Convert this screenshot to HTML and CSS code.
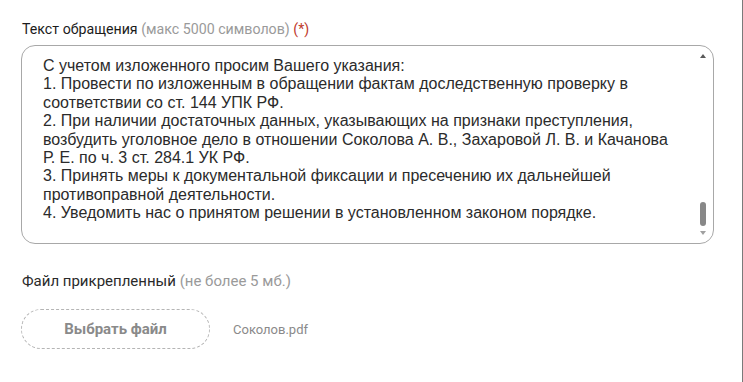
FILE: index.html
```html
<!DOCTYPE html>
<html lang="ru">

<head>
    <meta charset="UTF-8">
    <meta name="viewport" content="width=device-width, initial-scale=1.0">
    <title>Обращение</title>
    <link rel="stylesheet" href="styles.css">
</head>

<body>
    <div class="form">
        <div class="field">
            <label class="label">Текст обращения <span class="hint">(макс 5000 символов)</span> <span class="req">(*)</span></label>
            <div class="textbox">
                <div class="textbox-text">
                    <div>С учетом изложенного просим Вашего указания:</div>
                    <div>1. Провести по изложенным в обращении фактам доследственную проверку в</div>
                    <div>соответствии со ст. 144 УПК РФ.</div>
                    <div>2. При наличии достаточных данных, указывающих на признаки преступления,</div>
                    <div>возбудить уголовное дело в отношении Соколова А. В., Захаровой Л. В. и Качанова</div>
                    <div>Р. Е. по ч. 3 ст. 284.1 УК РФ.</div>
                    <div>3. Принять меры к документальной фиксации и пресечению их дальнейшей</div>
                    <div>противоправной деятельности.</div>
                    <div>4. Уведомить нас о принятом решении в установленном законом порядке.</div>
                </div>
                <div class="scrollbar">
                    <span class="arrow arrow-up"></span>
                    <span class="track"><span class="thumb"></span></span>
                    <span class="arrow arrow-down"></span>
                </div>
            </div>
        </div>

        <div class="field field-file">
            <label class="label">Файл прикрепленный <span class="hint">(не более 5 мб.)</span></label>
            <div class="file-row">
                <button class="file-btn">Выбрать файл</button>
                <span class="file-name">Соколов.pdf</span>
            </div>
        </div>
    </div>
</body>

</html>
```

FILE: styles.css
```css
html,
body {
    height: 100%;
}

body {
    margin: 0;
    background-color: #fff;
    border-right: 1px solid #7a7a7a;
    box-sizing: border-box;
    font-family: Roboto, 'Liberation Sans', sans-serif;
    color: #1c1c1c;
}

.form {
    padding: 20px 28px 0 21px;
}

.label {
    display: block;
    font-size: 14.2px;
    line-height: 18px;
    margin: 0 0 7px 1px;
}

.hint {
    color: #9a9a9a;
}

.req {
    color: #c0392b;
}

.textbox {
    display: flex;
    height: 199px;
    box-sizing: border-box;
    border: 1px solid #a8a8a8;
    border-radius: 14px;
    background-color: #fff;
}

.textbox-text {
    flex: 1;
    padding: 11px 10px 0 21px;
    font-family: 'Liberation Sans', Arial, sans-serif;
    font-size: 16px;
    line-height: 18.4px;
    color: #2b2b2b;
    white-space: nowrap;
    overflow: hidden;
}

.scrollbar {
    width: 16px;
    display: flex;
    flex-direction: column;
    align-items: center;
    padding: 8px 0 8px;
    margin-right: 2px;
}

.arrow {
    width: 0;
    height: 0;
    border-left: 3px solid transparent;
    border-right: 3px solid transparent;
}

.arrow-up {
    border-bottom: 4px solid #5a5a5a;
}

.arrow-down {
    border-top: 4px solid #a0a0a0;
}

.track {
    flex: 1;
    display: flex;
    flex-direction: column;
    justify-content: flex-end;
    padding: 0 0 5px;
}

.thumb {
    width: 6px;
    height: 24px;
    border-radius: 3px;
    background-color: #888;
}

.field-file {
    margin-top: 28px;
}

.field-file .label {
    font-size: 15px;
    color: #2a2a2a;
    margin-bottom: 19px;
}

.file-row {
    display: flex;
    align-items: center;
}

.file-btn {
    width: 189px;
    height: 40px;
    border: 1px dashed #b5b5b5;
    border-radius: 20px;
    background: #fff;
    font-family: Roboto, 'Liberation Sans', sans-serif;
    font-size: 15px;
    font-weight: bold;
    color: #8a8a8a;
    cursor: pointer;
}

.file-name {
    margin-left: 23px;
    font-size: 13px;
    color: #8a8a8a;
}
```
